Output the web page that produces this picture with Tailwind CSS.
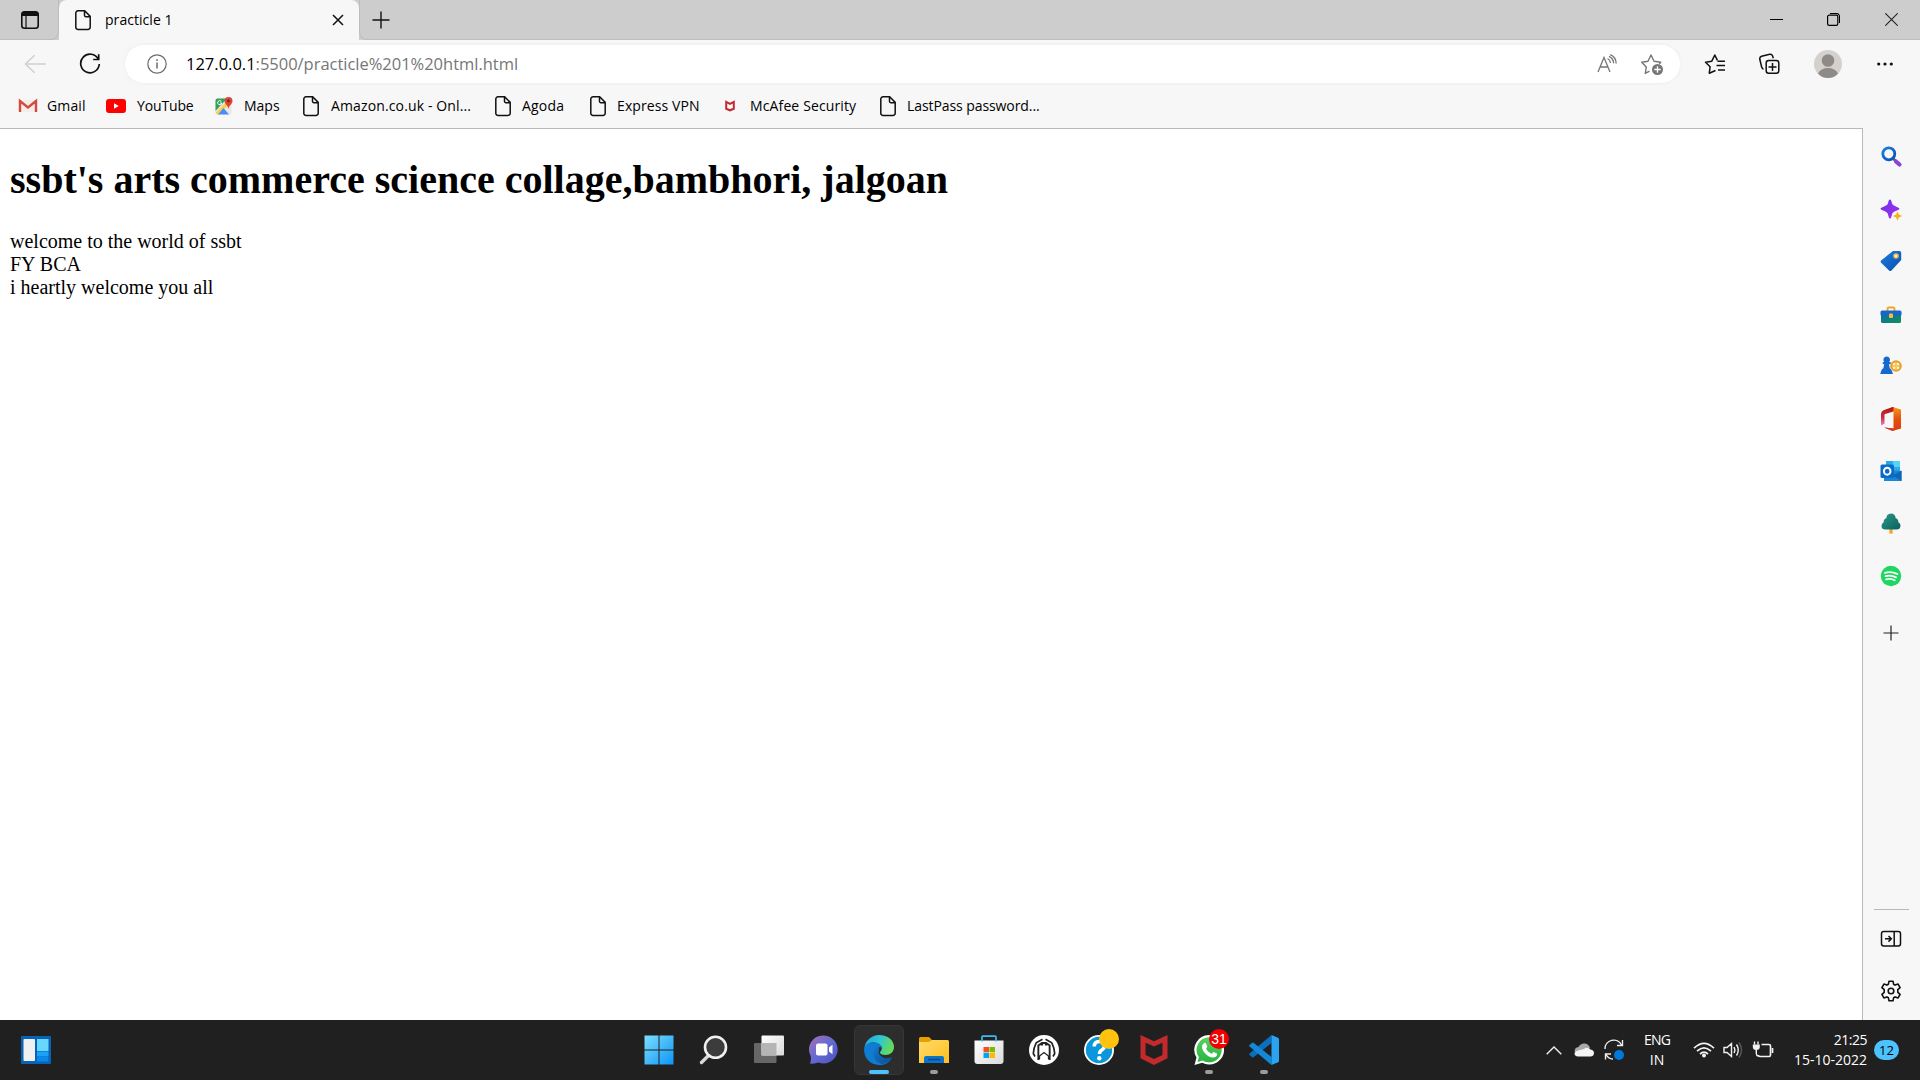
<!DOCTYPE html>
<html lang="en">
<head>
<meta charset="utf-8">
<title>practicle 1</title>
<script src="https://cdn.jsdelivr.net/npm/@tailwindcss/browser@4"></script>
</head>
<body class="bg-white">
<svg class="absolute w-0 h-0">
  <defs>
    <symbol id="doc" viewBox="0 0 20 22"><path d="M5 1.800h6.700l5.500 5.600v10.800a2.200 2.200 0 0 1-2.200 2.200H5a2.200 2.200 0 0 1-2.200-2.200V4A2.200 2.200 0 0 1 5 1.800ZM11.500 2v4.300a1.400 1.400 0 0 0 1.400 1.400H17" fill="none" stroke="#111" stroke-width="1.500" stroke-linejoin="round"/></symbol>
    <linearGradient id="win" gradientUnits="userSpaceOnUse" x1="0" y1="0" x2="30" y2="30"><stop stop-color="#7fe0ff"/><stop offset="1" stop-color="#0a93f5"/></linearGradient>
    <linearGradient id="gray" x1="0" y1="0" x2="1" y2="1"><stop stop-color="#ffffff"/><stop offset="1" stop-color="#dadada"/></linearGradient>
    <linearGradient id="chat" x1="0" y1="0" x2="1" y2="1"><stop stop-color="#a86fb4"/><stop offset=".5" stop-color="#6569d2"/><stop offset="1" stop-color="#4b51c0"/></linearGradient>
    <linearGradient id="edgeTop" x1="0" y1="0" x2="1" y2=".3"><stop stop-color="#1fa3e0"/><stop offset=".55" stop-color="#2fc6d2"/><stop offset="1" stop-color="#62dc5c"/></linearGradient>
    <linearGradient id="edgeLow" x1="0" y1="0" x2="1" y2="1"><stop stop-color="#1277c8"/><stop offset="1" stop-color="#0b4f9c"/></linearGradient>
    <linearGradient id="fold" x1="0" y1="0" x2="1" y2="1"><stop stop-color="#ffdc6b"/><stop offset="1" stop-color="#ffbe1c"/></linearGradient>
    <linearGradient id="blueteal" x1="0" y1="0" x2="1" y2="1"><stop stop-color="#1a7fe0"/><stop offset="1" stop-color="#0a4fae"/></linearGradient>
    <linearGradient id="spark" x1="0" y1="0" x2="1" y2="1"><stop stop-color="#6a35f0"/><stop offset="1" stop-color="#a62be8"/></linearGradient>
    <linearGradient id="tree" x1="0" y1="0" x2="1" y2="1"><stop stop-color="#2a9a86"/><stop offset="1" stop-color="#0b5f5d"/></linearGradient>
    <linearGradient id="box" x1="0" y1="0" x2="1" y2="1"><stop stop-color="#0b6fa8"/><stop offset="1" stop-color="#11905a"/></linearGradient>
    <linearGradient id="officeR" x1="0" y1="0" x2="0" y2="1"><stop stop-color="#f59a1c"/><stop offset=".5" stop-color="#e4500f"/><stop offset="1" stop-color="#dc3c08"/></linearGradient>
    <linearGradient id="officeL" x1="0" y1="0" x2="0" y2="1"><stop stop-color="#b3160e"/><stop offset=".6" stop-color="#cf3147"/><stop offset="1" stop-color="#f080c8"/></linearGradient>
    <linearGradient id="wa" x1="0" y1="0" x2="0" y2="1"><stop stop-color="#5bd066"/><stop offset="1" stop-color="#27b43e"/></linearGradient>
  </defs>
</svg>

<div class="w-[1920px] h-[1080px] flex flex-col overflow-hidden bg-[#f7f7f7] font-['Open_Sans','Noto_Sans',sans-serif] text-black">

  <!-- Tab strip -->
  <header class="h-10 shrink-0 flex bg-[#cdcdcd]">
    <div class="w-[59px] flex items-center pl-5 rounded-br-lg border-r border-b border-[#bdbdbd]">
      <svg class="size-5" viewBox="0 0 20 20"><rect x="1.800" y="1.800" width="16.400" height="16.400" rx="2.800" fill="none" stroke="#111" stroke-width="1.600"/><path d="M1.500 6V4.500a3 3 0 0 1 3-3h11a3 3 0 0 1 3 3V6Z" fill="#111"/><path d="M6 6v12" stroke="#111" stroke-width="1.200"/></svg>
    </div>
    <div class="w-[300px] flex items-center rounded-t-lg bg-[#f7f7f7] pl-[14px] pr-[15px]">
      <svg class="w-5 h-[22px]"><use href="#doc"/></svg>
      <span class="ml-[12px] text-[14px] leading-5 tracking-[0.05px] whitespace-nowrap">practicle 1</span>
      <svg class="ml-auto size-3" viewBox="0 0 12 12"><path d="M1 1l10 10M11 1 1 11" stroke="#111" stroke-width="1.500"/></svg>
    </div>
    <div class="flex-1 flex items-center rounded-bl-lg border-l border-b border-[#bdbdbd] pl-3 pr-[22px]">
      <svg class="size-[18px]" viewBox="0 0 18 18"><path d="M9 .5v17M.5 9h17" stroke="#111" stroke-width="1.400"/></svg>
      <svg class="ml-auto w-[13px] h-[13px]" viewBox="0 0 13 13"><path d="M0 6.500h13" stroke="#000" stroke-width="1"/></svg>
      <svg class="ml-[44px] size-[13px]" viewBox="0 0 13 13" fill="none" stroke="#000"><rect x=".6" y="2.200" width="10.200" height="10.200" rx="1.600" stroke-width="1.200"/><path d="M3 .5h6.500a3 3 0 0 1 3 3V10" stroke-width="1.100"/></svg>
      <svg class="ml-[45px] size-[13px]" viewBox="0 0 13 13"><path d="M.3.3l12.400 12.400M12.700.3.3 12.700" stroke="#222" stroke-width="1.100"/></svg>
    </div>
  </header>

  <!-- Address bar -->
  <div class="h-12 shrink-0 flex items-center pl-6 pr-[26px]">
    <svg class="w-[22px] h-5" viewBox="0 0 22 20" fill="none" stroke="#cfcfcf" stroke-width="1.500"><path d="M10.500 1.200 1.500 10l9 8.800M1.500 10H22"/></svg>
    <svg class="ml-[33px] size-[22px]" viewBox="0 0 22 22" fill="none" stroke="#111" stroke-width="1.700"><path d="M19.300 6.200A9.300 9.300 0 1 0 20.300 11M19.700 1.200v5.300h-5.500"/></svg>
    <div class="ml-6 w-[1555px] h-[38px] rounded-full bg-white shadow-[0_0_4px_rgba(0,0,0,0.05)] flex items-center pl-[22px] pr-[16px]">
      <svg class="size-5" viewBox="0 0 20 20" fill="none" stroke="#6b6b6b"><circle cx="10" cy="10" r="9.200" stroke-width="1.200"/><path d="M10 8.500v6M10 5.200v1.700" stroke-width="1.500"/></svg>
      <span class="ml-[19px] text-[16.5px] leading-6 whitespace-nowrap text-[#767676] flex"><span class="text-black">127.0.0.1</span><span class="tracking-[-0.02px]">:5500/practicle%201%20html.html</span></span>
      <svg class="ml-auto w-5 h-5" viewBox="0 0 20 20" fill="none" stroke="#767676" stroke-width="1.300"><path d="M1 18 7 3.500 13 18M3.200 13h7.700M10.500 4.500q2.700 1.300 3 4.500M12 2.300q4.200 1.700 4.700 7M13.200.7q5.600 2.300 6 8.800"/></svg>
      <svg class="ml-[23px] w-6 h-[22px]" viewBox="0 0 24 22" fill="none" stroke="#767676" stroke-width="1.400" stroke-linejoin="round"><path d="M9.500 18.200 5.300 20.400l1-6.500L1.700 9.300 8 8.300l3-6.300 3 6.300 6.800 1-1.600 1.600"/><circle cx="17.500" cy="16.500" r="5.500" fill="#767676" stroke="none"/><path d="M17.500 13.300v6.400M14.300 16.500h6.400" stroke="#fff" stroke-width="1.300"/></svg>
    </div>
    <svg class="ml-6 w-[22px] h-[22px]" viewBox="0 0 22 22" fill="none" stroke="#111" stroke-width="1.500" stroke-linejoin="round"><path d="M11.500 17.500 5.300 20.200l.8-6.500L1.500 9.200l6.300-1 3-6.200 2.600 5.300M13.500 8.200H21M12.500 12.500H21M14 17H21"/></svg>
    <svg class="ml-[33px] w-[22px] h-[22px]" viewBox="0 0 22 22" fill="none" stroke="#111" stroke-width="1.500"><rect x="7.200" y="7.600" width="12.600" height="12.600" rx="2.500"/><path d="M13.500 10v8M9.500 14h8M4.500 16.200q-1.500-.6-1.800-2L.8 6.300Q.4 4 2.600 3.300L10.800 1.200q2-.3 2.700 1.600l.8 2.400"/></svg>
    <svg class="ml-[33px] size-7" viewBox="0 0 28 28"><circle cx="14" cy="14" r="14" fill="#d4d1cd"/><circle cx="14" cy="10.500" r="6.300" fill="#8f8a87"/><path d="M4 23.500Q7 18 14 18t10 5.500Q20 28 14 28T4 23.500Z" fill="#8f8a87"/></svg>
    <svg class="ml-[35px] w-4 h-1" viewBox="0 0 16 4" fill="#111"><circle cx="1.700" cy="2" r="1.600"/><circle cx="8" cy="2" r="1.600"/><circle cx="14.300" cy="2" r="1.600"/></svg>
  </div>

  <!-- Bookmarks -->
  <nav class="h-10 shrink-0 flex items-start pt-2 pl-[18px] text-[14px] leading-5 whitespace-nowrap">
    <div class="w-[88px] flex items-center gap-[9px]">
      <svg class="size-5" viewBox="0 0 20 20"><path d="M2 4h16v12H2Z" fill="#f1eeec"/><path d="M2 16V5l8 6.500L18 5v11" fill="none" stroke="#d8493c" stroke-width="2.400"/></svg>
      <span class="tracking-[0.15px]">Gmail</span>
    </div>
    <div class="w-[108px] flex items-center gap-[11px]">
      <svg class="size-5" viewBox="0 0 20 20"><rect y="3" width="20" height="14" rx="3" fill="#f00"/><path d="M8 7.200v5.600l4.800-2.800Z" fill="#fff"/></svg>
      <span class="tracking-[-0.15px]">YouTube</span>
    </div>
    <div class="w-[87px] flex items-center gap-[10px]">
      <svg class="size-5" viewBox="0 0 20 20"><rect x="1.500" y="2.500" width="16" height="16" rx="2" fill="#e8e8e8"/><path d="M1.500 4.500a2 2 0 0 1 2-2H13L1.500 15Z" fill="#34a05a"/><path d="M1.500 17 13 5l3 2.500L4.500 18.500h-1Z" fill="#f7d04a"/><path d="M9.500 12 4 18.500h11Z" fill="#4b8df5"/><path d="M14.500 1a4 4 0 0 1 4 4c0 3-3.300 4-4 8-.7-4-4-5-4-8a4 4 0 0 1 4-4Z" fill="#dc4438"/><circle cx="14.500" cy="5" r="1.400" fill="#7b1f19"/><path d="M7.300 5.500a2 2 0 1 0 .4 1.500H6" fill="none" stroke="#fff"/></svg>
      <span>Maps</span>
    </div>
    <div class="w-[192px] flex items-center gap-[10px]"><svg class="w-5 h-[22px] -my-px"><use href="#doc"/></svg><span class="tracking-[0.13px]">Amazon.co.uk - Onl...</span></div>
    <div class="w-[95px] flex items-center gap-[9px]"><svg class="w-5 h-[22px] -my-px"><use href="#doc"/></svg><span class="tracking-[0.2px]">Agoda</span></div>
    <div class="w-[132px] flex items-center gap-[9px]"><svg class="w-5 h-[22px] -my-px"><use href="#doc"/></svg><span class="tracking-[0.1px]">Express VPN</span></div>
    <div class="w-[158px] flex items-center gap-[10px]">
      <svg class="size-5" viewBox="0 0 20 20"><path d="M6.200 5.800v7l3.800 1.500 3.800-1.500v-7L10 7.800Z" fill="none" stroke="#c32b33" stroke-width="2"/></svg>
      <span class="tracking-[0.13px]">McAfee Security</span>
    </div>
    <div class="flex items-center gap-[9px]"><svg class="w-5 h-[22px] -my-px"><use href="#doc"/></svg><span class="tracking-[-0.08px]">LastPass password...</span></div>
  </nav>

  <div class="flex-1 min-h-0 flex">
    <!-- Page -->
    <main class="w-[1863px] bg-white border-t border-r border-[#b9b9b9] px-[10px] pt-[27px] font-['Liberation_Serif',serif]">
      <h1 class="text-[40px] leading-[47px] font-bold whitespace-nowrap">ssbt's arts commerce science collage,bambhori, jalgoan</h1>
      <p class="mt-[27px] text-[20px] leading-[23px]">welcome to the world of ssbt<br>FY BCA<br>i heartly welcome you all</p>
    </main>

    <!-- Sidebar -->
    <aside class="flex-1 flex flex-col items-center pt-[16px] pr-px">
      <svg class="size-6" viewBox="0 0 24 24"><path d="m14.500 15 2.500 2.200" stroke="#555" stroke-width="2.500"/><path d="m17 17.500 3.500 3" stroke="#8a42dc" stroke-width="4.200" stroke-linecap="round"/><circle cx="9.800" cy="9.800" r="6" fill="none" stroke="url(#blueteal)" stroke-width="2.800"/></svg>
      <svg class="mt-[30px] size-6" viewBox="0 0 24 24"><path d="M11 1.500c1 0 1.400 1.500 2.200 4.200 1.200 2.800 7.300 3.300 7.300 5s-6.100 2-7.300 5c-.8 2.800-1.200 5-2.200 5s-1.400-2.200-2.200-5c-1.200-3-7.300-3.300-7.300-5s6.100-2.200 7.300-5C9.600 3 10 1.500 11 1.500Z" fill="url(#spark)"/><path d="m18.500 13.500 1.400 3.100 3.300 1.400-3.300 1.400-1.400 3.300-1.400-3.300-3.300-1.400 3.300-1.400Z" fill="#f5b21c"/></svg>
      <svg class="mt-[27px] size-6" viewBox="0 0 24 24"><path d="M14 2h6.500a1.700 1.700 0 0 1 1.700 1.700V11L12.500 21.400q-1.200 1-2.400 0l-8-7.600q-1-1.200 0-2.400Z" fill="url(#blueteal)"/><circle cx="17" cy="7" r="2" fill="#fff" stroke="#f3bb3c" stroke-width="1.600"/></svg>
      <svg class="mt-[30px] size-6" viewBox="0 0 24 24"><path d="M8.500 8V5.700q0-1.200 1.200-1.200h4.600q1.200 0 1.200 1.200V8" fill="none" stroke="#eaa928" stroke-width="1.900"/><rect x="2" y="11" width="20" height="9" rx="1.500" fill="url(#box)"/><rect x="1.500" y="7.500" width="21" height="5.300" rx="1.500" fill="#1766c8"/><rect x="10" y="10.500" width="4" height="4.500" rx="1" fill="#fbbf35"/></svg>
      <svg class="mt-[27px] size-6" viewBox="0 0 24 24"><circle cx="17" cy="12" r="5.800" fill="#e6a12a"/><circle cx="17" cy="12" r="3.800" fill="#f6c862"/><g fill="#fff"><circle cx="15" cy="10" r="1"/><circle cx="19" cy="10" r="1"/><circle cx="15" cy="14" r="1"/><circle cx="19" cy="14" r="1"/></g><path d="M7.700 2.500a3.300 3.300 0 0 1 2.500 5.500l1.500.3v1.600H10q0 4 2.500 6l1.500 4H1.200l1.300-4q2.700-2 2.700-6H3.700V8.300L5.200 8a3.300 3.300 0 0 1 2.500-5.500Z" fill="#1769cc"/></svg>
      <svg class="mt-[29px] size-6" viewBox="0 0 24 24"><path d="M13.500 0 22 2.500v19L13.500 24 5 20.500l9.500 1V4.500Z" fill="url(#officeR)"/><path d="M13.500 0 4.500 3.300Q2 4.300 2 7v11.500l3.500-1.700V7.200L14.500 4.500V0Z" fill="url(#officeL)"/><path d="m5 20.500 9.500 1V24Z" fill="#d0342c"/></svg>
      <svg class="mt-7 size-6" viewBox="0 0 24 24"><rect x="7" y="2" width="14" height="12" fill="#2fa8ea"/><path d="M14 2h7v6h-7Z" fill="#55d2f8"/><path d="M5 10.500 22.500 12v10H5Z" fill="#1a86d8"/><path d="m22.500 11.500-9 5 9 5.500Z" fill="#1066b5"/><rect x="1.500" y="5.500" width="13.500" height="13.500" rx="1.500" fill="#0a6cc9"/><ellipse cx="8.200" cy="12.200" rx="3.300" ry="3.500" fill="none" stroke="#fff" stroke-width="1.900"/></svg>
      <svg class="mt-[29px] size-6" viewBox="0 0 24 24"><path d="M10.300 16h3.400v5.200q-1.700 1-3.400 0Z" fill="#efaa2b"/><path d="M12 1.500a4.500 4.500 0 0 1 4.600 4.500q3 1.200 2.700 4.200 2.400 1 2.200 3.800-.4 3.500-4 3.500H6.300q-3.500 0-3.800-3.300 0-2.800 2.200-4Q4.400 7.200 7.400 6 7.500 1.800 12 1.500Z" fill="url(#tree)"/></svg>
      <svg class="mt-7 size-6" viewBox="0 0 24 24"><circle cx="12" cy="12" r="10.200" fill="#1ed760"/><path d="M5.800 8.800q6.700-2 12.700 1.300M6.500 12.200q5.600-1.500 10.500 1.200M7 15.300q4.700-1.200 8.700 1" fill="none" stroke="#fff" stroke-width="1.800" stroke-linecap="round"/></svg>
      <svg class="mt-[37px] size-4" viewBox="0 0 16 16"><path d="M8 .5v15M.5 8h15" stroke="#222" stroke-width="1.200"/></svg>
      <div class="mt-auto w-[35px] h-px bg-[#b9b9b9]"></div>
      <svg class="mt-[19px] w-[22px] h-5" viewBox="0 0 22 20" fill="none" stroke="#111" stroke-width="1.500"><rect x="1.500" y="2.500" width="19" height="14.500" rx="2.200"/><path d="M14.200 2.500V17M5 9.800h6M8.500 7l2.800 2.800-2.800 2.800"/></svg>
      <svg class="mt-[30px] mb-[17px] size-6" viewBox="0 0 24 24" fill="none" stroke="#111" stroke-width="1.600" stroke-linejoin="round"><path d="M10 2.200h4l.6 3 1.500.9 3-1 2 3.500-2.300 2.100v2.600l2.300 2.100-2 3.500-3-1-1.500.9-.6 3h-4l-.6-3-1.500-.9-3 1-2-3.500 2.300-2.100v-2.600L2.900 8.600l2-3.500 3 1 1.500-.9Z"/><circle cx="12" cy="12" r="2.800"/></svg>
    </aside>
  </div>

  <!-- Taskbar -->
  <footer class="h-[60px] shrink-0 flex items-center bg-[#202020] text-white">
    <svg class="ml-[21px] w-[30px] h-7" viewBox="0 0 30 28"><rect width="30" height="28" rx="1" fill="#0a62b5"/><rect x="2.500" y="3" width="11.500" height="22" rx="1" fill="#f0f0f0"/><rect x="16" y="3" width="11.500" height="12" fill="#68d7fd"/><rect x="16" y="15.500" width="11.500" height="5" fill="#1ba1f8"/><rect x="16" y="21" width="11.500" height="4.500" fill="#0688ee"/></svg>

    <div class="ml-[580px] flex h-full">
      <div class="w-[55px] flex items-center justify-center"><svg class="size-[30px]" viewBox="0 0 30 30"><path d="M.5.5h14v14H.5ZM15.500.5h14v14h-14ZM.5 15.500h14v14H.5ZM15.500 15.500h14v14h-14Z" fill="url(#win)"/></svg></div>
      <div class="w-[55px] flex items-center justify-center"><svg class="size-[30px]" viewBox="0 0 30 30" fill="none"><path d="m10 20-7.500 7.500" stroke="#d8d8d8" stroke-width="3.400" stroke-linecap="round"/><circle cx="16.500" cy="12.300" r="10.500" fill="#3c3c3c" stroke="#f0f0f0" stroke-width="2.600"/></svg></div>
      <div class="w-[55px] flex items-center justify-center"><svg class="size-[30px]" viewBox="0 0 30 30"><rect y="8" width="22.500" height="20" rx="1" fill="#676767"/><rect x="7.500" y=".5" width="22.500" height="20" rx="1" fill="url(#gray)"/><rect x="7.500" y="8" width="15" height="12.500" fill="#b5b5b5"/></svg></div>
      <div class="w-[55px] flex items-center justify-center"><svg class="size-[30px]" viewBox="0 0 30 30"><path d="M15 .5a14 14 0 1 1-5.500 27Q6 29 1 28.500q1.500-3 .7-7.500A14 14 0 0 1 15 .5Z" fill="url(#chat)"/><rect x="7" y="8.500" width="11.500" height="12" rx="2" fill="#fff"/><path d="m20 12.500 3.500-2.800v9.600L20 16.500Z" fill="#fff"/></svg></div>
      <div class="w-[55px] px-[2.500px] flex items-center justify-center">
        <div class="relative size-[50px] rounded-md bg-[#2d2d2d] border border-[#363636] flex items-center justify-center">
          <svg class="size-[30px]" viewBox="0 0 30 30"><path d="M.3 13A15 15 0 0 1 15 0c9 0 15 5.500 15 12 0 5-4 8-8.500 8-3.500 0-5.500-1.200-5.500-2.500 0-1 1.800-1.500 1.800-4.500 0-3-4-5.500-8.300-5.500C5 7.500 1.500 10 .3 13Z" fill="url(#edgeTop)"/><path d="M.2 13C1.500 9 5.500 7.200 9.500 7.200c4.700 0 8 2.800 8.300 5.300-6-2-9.300 8.500-1 13 5 2.300 10 .5 11-1.500A15 15 0 0 1 15 30C6 30-1 22.500.2 13Z" fill="#0f7bd3"/><path d="M13.200 12.500C7.500 15 8 25 16 28.500q2 .8 5 0c3-1 5.300-3 6.800-5.300.4-.8-.3-1-1-.6-7 2.900-14.800-3.100-11.300-8.600Z" fill="url(#edgeLow)"/></svg>
          <div class="absolute left-[14px] bottom-0 w-5 h-1 rounded-full bg-[#4cc2ff]"></div>
        </div>
      </div>
      <div class="relative w-[55px] flex items-center justify-center"><svg class="size-[30px]" viewBox="0 0 30 30"><path d="M0 3.500A1.500 1.500 0 0 1 1.500 2H10l3 3v3H0Z" fill="#e6a100"/><path d="M0 7h10l3-2h15.500A1.500 1.500 0 0 1 30 6.500V28H0Z" fill="url(#fold)"/><path d="M5 28v-5q0-2 2-2h16q2 0 2 2v5Z" fill="#0d73c8"/><path d="M9 24.500h12" stroke="#0a4a86" stroke-width="1.500"/></svg><div class="absolute bottom-[6px] w-2 h-1 rounded-full bg-[#9c9c9c]"></div></div>
      <div class="w-[55px] flex items-center justify-center"><svg class="size-[30px]" viewBox="0 0 30 30"><path d="M.5 5.500h29V26q0 3-3 3h-23q-3 0-3-3Z" fill="url(#gray)"/><path d="M8 6.500V2.200q0-1 1-1h12q1 0 1 1v4.300" fill="none" stroke="#38bdf0" stroke-width="1.700"/><path d="M9.500 12H15v5.200H9.500Z" fill="#f25022"/><path d="M15.500 12H21v5.200h-5.500Z" fill="#7fba00"/><path d="M9.500 17.800H15V23H9.500Z" fill="#00a4ef"/><path d="M15.500 17.800H21V23h-5.500Z" fill="#ffb900"/></svg></div>
      <div class="w-[55px] flex items-center justify-center"><svg class="size-[30px]" viewBox="0 0 30 30"><circle cx="15" cy="15" r="15" fill="#fff"/><path d="M13.500 4.200 7.200 7.800Q4.500 13 4.300 18.500l1.700 3M16.500 4.200l6.300 3.600q2.700 5.200 2.900 10.700l-1.700 3" fill="none" stroke="#222" stroke-width="1.700"/><path d="M9.500 25V10.500L13 8h4l3.500 2.500V25M13 8v3M17 8v3" fill="none" stroke="#222" stroke-width="2.200"/><path d="M10.500 10.500h9V22L15 18.500 10.500 22Z" fill="#fff"/><path d="M10.500 24v-3L15 17.500l4.500 3.500v3" fill="none" stroke="#222" stroke-width="1.300"/></svg></div>
      <div class="relative w-[55px] flex items-center justify-center"><svg class="size-[30px]" viewBox="0 0 30 30"><circle cx="15" cy="15" r="15" fill="#fff"/><circle cx="15" cy="15" r="13.200" fill="#0b97db"/><path d="M10.300 11.500q0-5 5-5 5.200 0 5.200 4.300 0 2.700-2.700 4.200-2.300 1.200-2.300 4" fill="none" stroke="#fff" stroke-width="3.500"/><circle cx="15.300" cy="23.300" r="2.200" fill="#fff"/></svg><div class="absolute left-[28px] top-[9px] size-5 rounded-full bg-[#ffc20e]"></div></div>
      <div class="w-[55px] flex items-center justify-center"><svg class="w-7 h-[30px]" viewBox="0 0 28 30"><path d="M.5 0 14 6.300 27.500 0v23.300L14 30 .5 23.300ZM5.500 7.800v12.300l8.500 4 8.500-4V7.800L14 11.600Z" fill="#c22a2c" fill-rule="evenodd"/></svg></div>
      <div class="relative w-[55px] flex items-center justify-center"><svg class="size-[30px]" viewBox="0 0 30 30"><path d="M15.200 0a14.800 14.800 0 1 1-7 27.800L.5 30l2-7.500A14.800 14.800 0 0 1 15.200 0Z" fill="#fff"/><path d="M15.200 2.300a12.500 12.500 0 1 1-6.500 23.200L3.500 27l1.400-5A12.500 12.500 0 0 1 15.200 2.300Z" fill="url(#wa)"/><path d="M10 8.200c.8-.6 1.700-.4 2 .3l1.200 2.800c.3.800-1.400 2-1 2.700 1.300 2.300 3 3.700 5.300 4.700.8.200 1.600-1.900 2.300-1.600l3 1.500c1 .6-.2 4.200-4 4-5-.2-11-6.500-10.700-10.800.1-1.800 1-3 1.900-3.600Z" fill="#fff"/></svg><div class="absolute left-[28px] top-[9px] size-5 rounded-full bg-[#f20000] flex items-center justify-center text-[14px] leading-none font-['Liberation_Sans',sans-serif]">31</div><div class="absolute bottom-[6px] w-2 h-1 rounded-full bg-[#9c9c9c]"></div></div>
      <div class="relative w-[55px] flex items-center justify-center"><svg class="size-[30px]" viewBox="0 0 30 30"><path d="m22.500 8-18 14.300q-.7.500-1.300 0L.6 20q-.7-.7 0-1.400L22.500 0Z" fill="#0a70bd"/><path d="m22.500 22-18-14.300q-.7-.5-1.300 0L.6 10q-.7.700 0 1.400L22.500 30Z" fill="#1488d8"/><path d="M22.500 0 29 2.800q1 .5 1 1.500v21.400q0 1-1 1.500L22.500 30Z" fill="#29a3f2"/></svg><div class="absolute bottom-[6px] w-2 h-1 rounded-full bg-[#9c9c9c]"></div></div>
    </div>

    <div class="ml-auto flex items-center pr-[21px] text-[14px] leading-5">
      <svg class="w-4 h-[9px]" viewBox="0 0 16 9"><path d="m.7 8.300 7.300-7.300 7.300 7.300" fill="none" stroke="#eee" stroke-width="1.400"/></svg>
      <svg class="ml-3 w-5 h-[14px]" viewBox="0 0 20 14"><path d="M1 10Q-.5 5 4.500 4 6.500.3 10.500.5q4 .2 5.500 4.500l-4 4Z" fill="#a9a9a9"/><path d="M4 13.500q-3.500-.5-3.500-3 .5-2.500 3.500-3l6-1.500q3-2.500 6.500.5 3.500.5 3.500 3.700-.5 3.300-3.500 3.300Z" fill="#f4f4f4"/></svg>
      <svg class="ml-[10px] w-[22px] h-[22px]" viewBox="0 0 22 22" fill="none" stroke="#eee" stroke-width="1.400"><path d="M1 10A8.700 8.700 0 0 1 17.500 6M18.500 1v5.500H13M1.500 20.500V15H7M2 15.500q2.500 4.500 7 4.500"/><circle cx="15" cy="16" r="5" fill="#0078d7" stroke="none"/></svg>
      <div class="ml-[15px] w-[32px] flex flex-col items-center"><span class="tracking-[-0.8px]">ENG</span><span>IN</span></div>
      <svg class="ml-5 w-[22px] h-4" viewBox="0 0 22 16" fill="none" stroke="#f2f2f2" stroke-width="1.700"><path d="M1 6.200q10-9.800 20 0M4 9.200q7-6.700 14 0M7 12q4-3.600 8 0"/><circle cx="11" cy="13.500" r="2" fill="#f2f2f2" stroke="none"/></svg>
      <svg class="ml-2 w-5 h-[18px]" viewBox="0 0 20 18" fill="none" stroke="#f2f2f2" stroke-width="1.400"><path d="M1 6.500h3l4.500-4v13L4 11.500H1ZM11 6q1.700 3 0 6M13.500 3.500q3.500 5.500 0 11"/><path d="M16 1.500q5 7.500 0 15" stroke="#5a5a5a"/></svg>
      <svg class="ml-[9px] w-[22px] h-[18px]" viewBox="0 0 22 18" fill="none" stroke="#f2f2f2" stroke-width="1.700"><path d="M9.500 3.500H17q1.500 0 1.500 1.500v9q0 1.500-1.500 1.500H8q-1.700 0-1.700-1.500"/><path d="M20.500 7v5"/><path d="M2.500.5v3M6 .5v3M4.300 8v4.500q0 2 2 2.500" stroke-width="1.400"/><path d="M.8 3.500h7V6q0 3-3.500 3T.8 6Z" fill="#f2f2f2" stroke="none"/></svg>
      <div class="ml-[19px] w-[74px] flex flex-col items-end whitespace-nowrap"><span class="tracking-[-0.5px]">21:25</span><span>15-10-2022</span></div>
      <div class="ml-[7px] w-[25px] h-5 rounded-full bg-[#4cc2ff] flex items-center justify-center text-black text-[13px]">12</div>
    </div>
  </footer>
</div>
</body>
</html>
